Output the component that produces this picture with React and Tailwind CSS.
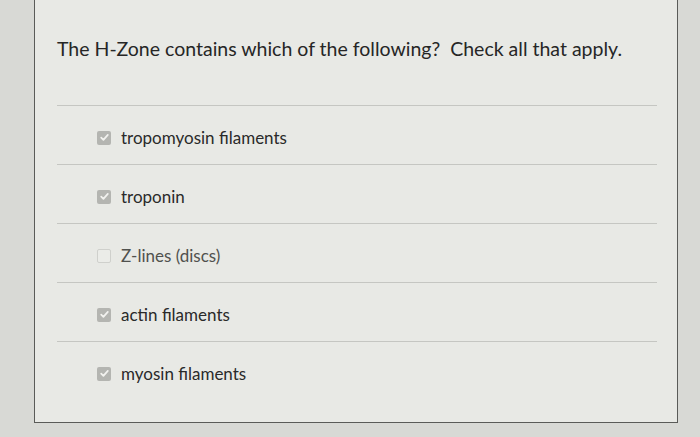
import React from "react";

const options = [
  { label: "tropomyosin filaments", checked: true },
  { label: "troponin", checked: true },
  { label: "Z-lines (discs)", checked: false },
  { label: "actin filaments", checked: true },
  { label: "myosin filaments", checked: true },
];

function Box({ checked }) {
  if (!checked) {
    return <span className="block w-[14px] h-[14px] rounded-[2px] border border-[#cfd0cc] bg-[#ebece8]"></span>;
  }
  return (
    <span className="flex items-center justify-center w-[14px] h-[14px] rounded-[2px] bg-[#b4b5b1]">
      <svg width="11" height="11" viewBox="0 0 10 10" fill="none">
        <path d="M2 5.2l2 2 4-4.6" stroke="#f2f2ef" strokeWidth="1.6" strokeLinecap="round" strokeLinejoin="round" />
      </svg>
    </span>
  );
}

export default function App() {
  return (
    <div className="w-[700px] h-[437px] overflow-hidden bg-[#d8d9d5] pl-[34px] font-['Lato','Liberation_Sans',sans-serif]">
      <div className="-mt-[2px] w-[644px] h-[425px] border border-[#5a5b58] bg-[#e8e9e5] pl-[22px] pr-[20px]">
        <div className="pt-[38px] text-[19.5px] leading-[24px] text-[#262626]">
          The H-Zone contains which of the following?&nbsp; Check all that apply.
        </div>
        <div className="mt-[44px]">
          {options.map((o) => (
            <div key={o.label} className="h-[59px] border-t border-[#c5c6c2] flex items-center pt-[5px] pl-[40px] gap-[10px]">
              <Box checked={o.checked} />
              <span className={"text-[17px] " + (o.checked ? "text-[#2a2a2a]" : "text-[#50514e]")}>{o.label}</span>
            </div>
          ))}
        </div>
      </div>
    </div>
  );
}
